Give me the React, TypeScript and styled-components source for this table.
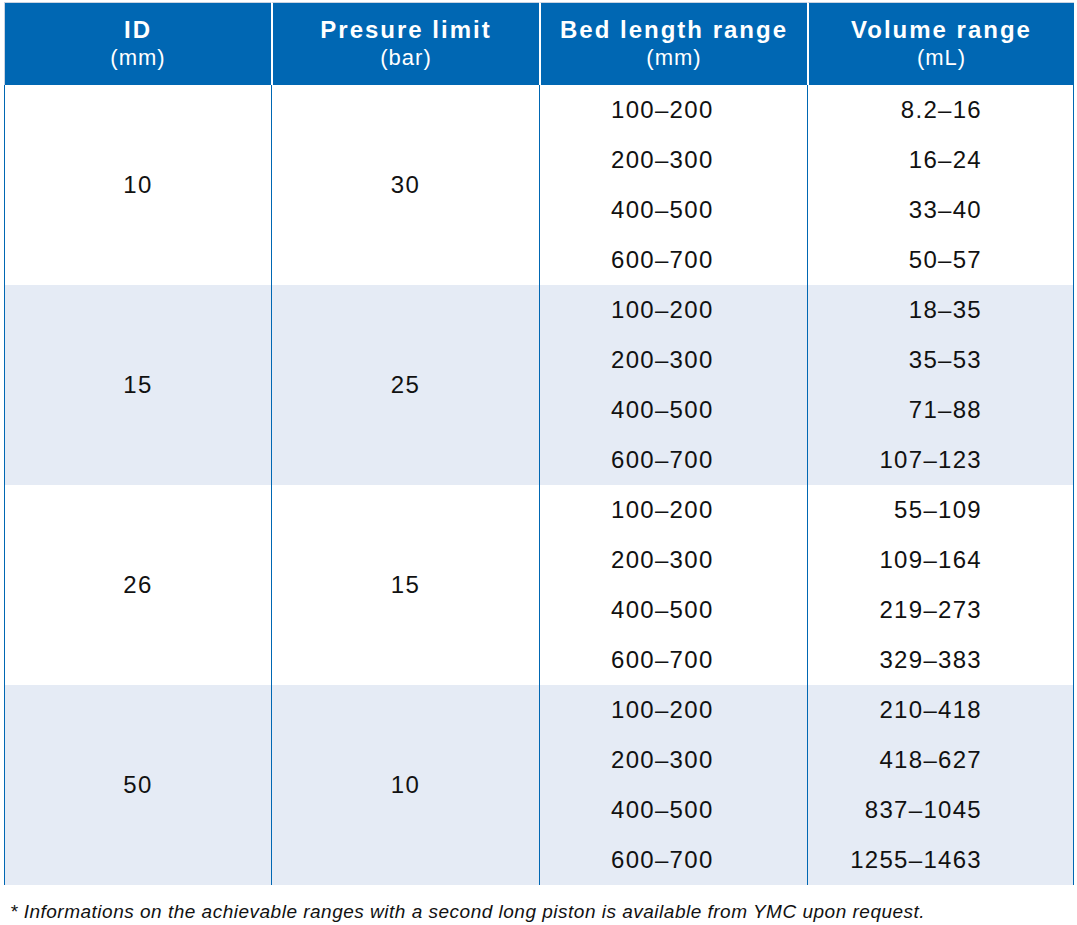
import { ReactElement } from 'react';
import styled, { createGlobalStyle } from 'styled-components';

const GlobalStyle = createGlobalStyle`
    html, body {
        margin: 0;
        padding: 0;
        background: #fff;
    }
`;

const BLUE = '#0067b3';
const SHADE = '#e5ebf5';

const Page = styled.div`
    padding: 2px 3px 0 4px;
    font-family: 'Liberation Sans', Arial, sans-serif;
    color: #111;
`;

const Table = styled.table`
    border-collapse: separate;
    border-spacing: 0;
    width: 1070px;
    table-layout: fixed;
`;

const HeadCell = styled.th<{ $first?: boolean }>`
    height: 82px;
    padding: 0;
    background-color: ${BLUE};
    color: #fff;
    border-top: 1px solid #c9d3e2;
    border-left: ${(p) => (p.$first ? '1px solid #c9d3e2' : '2px solid #fff')};
    text-align: center;
    vertical-align: middle;
`;

const HeadTitle = styled.div`
    font-size: 24px;
    font-weight: 700;
    letter-spacing: 2px;
    line-height: 28px;
`;

const HeadUnit = styled.div`
    font-size: 22px;
    font-weight: 400;
    letter-spacing: 1px;
    line-height: 28px;
`;

const Row = styled.tr<{ $shaded: boolean }>`
    background-color: ${(p) => (p.$shaded ? SHADE : '#fff')};
`;

const Cell = styled.td<{ $align: 'center' | 'left' | 'right'; $last?: boolean }>`
    height: 50px;
    padding: 0;
    box-sizing: border-box;
    font-size: 24px;
    letter-spacing: 1.3px;
    border-left: 1px solid ${BLUE};
    border-right: ${(p) => (p.$last ? `1px solid ${BLUE}` : 'none')};
    text-align: ${(p) => p.$align};
    padding-left: ${(p) => (p.$align === 'left' ? '71px' : '0')};
    padding-right: ${(p) => (p.$align === 'right' ? '91px' : '0')};
    vertical-align: middle;
`;

const Footnote = styled.p`
    margin: 16px 0 0 6px;
    font-size: 19px;
    font-style: italic;
    letter-spacing: 0.5px;
    line-height: 22px;
    color: #111;
`;

const groups = [
    { id: '10', pressure: '30', volumes: ['8.2–16', '16–24', '33–40', '50–57'] },
    { id: '15', pressure: '25', volumes: ['18–35', '35–53', '71–88', '107–123'] },
    { id: '26', pressure: '15', volumes: ['55–109', '109–164', '219–273', '329–383'] },
    { id: '50', pressure: '10', volumes: ['210–418', '418–627', '837–1045', '1255–1463'] },
];

const beds = ['100–200', '200–300', '400–500', '600–700'];

const headers = [
    { title: 'ID', unit: '(mm)' },
    { title: 'Presure limit', unit: '(bar)' },
    { title: 'Bed length range', unit: '(mm)' },
    { title: 'Volume range', unit: '(mL)' },
];

function App(): ReactElement {
    return (
        <Page>
            <GlobalStyle />
            <Table>
                <colgroup>
                    <col style={{ width: 267 }} />
                    <col style={{ width: 268 }} />
                    <col style={{ width: 268 }} />
                    <col style={{ width: 267 }} />
                </colgroup>
                <thead>
                    <tr>
                        {headers.map((h, i) => (
                            <HeadCell key={h.title} $first={i === 0}>
                                <HeadTitle>{h.title}</HeadTitle>
                                <HeadUnit>{h.unit}</HeadUnit>
                            </HeadCell>
                        ))}
                    </tr>
                </thead>
                <tbody>
                    {groups.map((g, gi) =>
                        beds.map((bed, bi) => (
                            <Row key={g.id + bed} $shaded={gi % 2 === 1}>
                                {bi === 0 && (
                                    <>
                                        <Cell $align="center" rowSpan={4}>
                                            {g.id}
                                        </Cell>
                                        <Cell $align="center" rowSpan={4}>
                                            {g.pressure}
                                        </Cell>
                                    </>
                                )}
                                <Cell $align="left">{bed}</Cell>
                                <Cell $align="right" $last>
                                    {g.volumes[bi]}
                                </Cell>
                            </Row>
                        ))
                    )}
                </tbody>
            </Table>
            <Footnote>
                * Informations on the achievable ranges with a second long piston is available from YMC upon request.
            </Footnote>
        </Page>
    );
}

export default App;
